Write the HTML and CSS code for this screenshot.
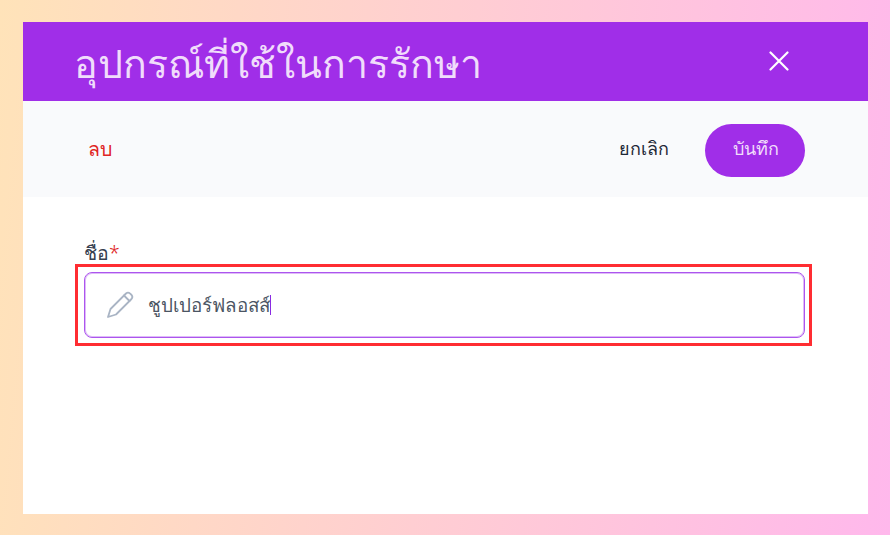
FILE: index.html
```html
<!DOCTYPE html>
<html lang="th">
<head>
    <meta charset="UTF-8">
    <meta name="viewport" content="width=device-width, initial-scale=1.0">
    <title>อุปกรณ์ที่ใช้ในการรักษา</title>
    <link rel="stylesheet" href="styles.css">
</head>
<body>
    <div class="modal">
        <div class="modal-header">
            <h1 class="modal-title">อุปกรณ์ที่ใช้ในการรักษา</h1>
            <button class="close-button" aria-label="ปิด">
                <svg width="20" height="20" viewBox="0 0 20 20" fill="none" stroke="currentColor" stroke-width="2.2" stroke-linecap="round">
                    <path d="M1.5 1.5 L18.5 18.5 M18.5 1.5 L1.5 18.5"/>
                </svg>
            </button>
        </div>

        <div class="action-bar">
            <button class="delete-button">ลบ</button>
            <div class="action-right">
                <button class="cancel-button">ยกเลิก</button>
                <button class="save-button">บันทึก</button>
            </div>
        </div>

        <div class="form">
            <div class="form-group">
                <label class="field-label">ชื่อ<span class="required">*</span></label>
                <div class="field-input">
                    <svg class="pencil-icon" width="30" height="30" viewBox="0 0 30 30" fill="none" stroke="currentColor" stroke-width="1.8" stroke-linejoin="round" stroke-linecap="round">
                        <path d="M3 27 L5.5 19 L21 3.5 Q23 1.8 25.2 3.6 L26.6 5 Q28.2 7 26.5 9 L11 24.5 Z"/>
                        <path d="M19 5.5 L24.5 11"/>
                    </svg>
                    <span class="field-value">ชูปเปอร์ฟลอสส์</span><span class="caret"></span>
                </div>
                <div class="highlight-box"></div>
            </div>
        </div>
    </div>
</body>
</html>
```

FILE: styles.css
```css
* {
    box-sizing: border-box;
}
html, body {
    height: 100%;
}
body {
    margin: 0;
    padding: 22px 22px 21px 23px;
    font-family: "Noto Sans", Roboto, sans-serif;
    font-weight: 300;
    background: linear-gradient(95deg, #ffe3b9, #ffb8ec);
    overflow: hidden;
}
button {
    font: inherit;
    border: none;
    background: none;
    padding: 0;
    cursor: pointer;
}
.modal {
    height: 100%;
    background-color: #fff;
}
.modal-header {
    height: 79px;
    display: flex;
    align-items: center;
    justify-content: space-between;
    padding: 0 79px 0 51px;
    background-color: #a02ee8;
    color: #f0dcfb;
}
.modal-title {
    margin: 4px 0 0;
    font-size: 39.3px;
    font-weight: 300;
}
.close-button {
    display: flex;
    margin-bottom: 2px;
    color: #fff;
}
.action-bar {
    height: 96px;
    display: flex;
    align-items: center;
    justify-content: space-between;
    padding: 0 63px 0 65px;
    background-color: #f9fafc;
    font-size: 18px;
}
.delete-button {
    font-size: 19.5px;
    color: #e02424;
}
.action-right {
    display: flex;
    align-items: center;
    gap: 36px;
}
.cancel-button {
    margin-bottom: 1px;
    color: #1f2937;
}
.save-button {
    width: 100px;
    height: 53px;
    margin-top: 2px;
    padding: 0 0 3px 2px;
    border-radius: 27px;
    background-color: #a02ee8;
    color: #f0dcfb;
}
.form {
    padding: 40px 63px 0 61px;
}
.form-group {
    position: relative;
}
.field-label {
    display: block;
    height: 35px;
    font-size: 19.5px;
    line-height: 31px;
    color: #374151;
}
.required {
    color: #e02424;
}
.field-input {
    height: 66px;
    display: flex;
    align-items: center;
    padding-left: 20px;
    border: 1px solid #ac55ee;
    border-radius: 8px;
    background-color: #fff;
    box-shadow: inset 0 0 0 1px rgba(172, 85, 238, 0.4);
    font-size: 18.8px;
    color: #4b5563;
}
.pencil-icon {
    color: #a9b4c4;
    margin-right: 13px;
}
.caret {
    width: 1px;
    height: 20px;
    background-color: #8a2be2;
}
.highlight-box {
    position: absolute;
    left: -9px;
    right: -7px;
    bottom: -8px;
    height: 82px;
    border: 3px solid #ff2d32;
    pointer-events: none;
}
```
